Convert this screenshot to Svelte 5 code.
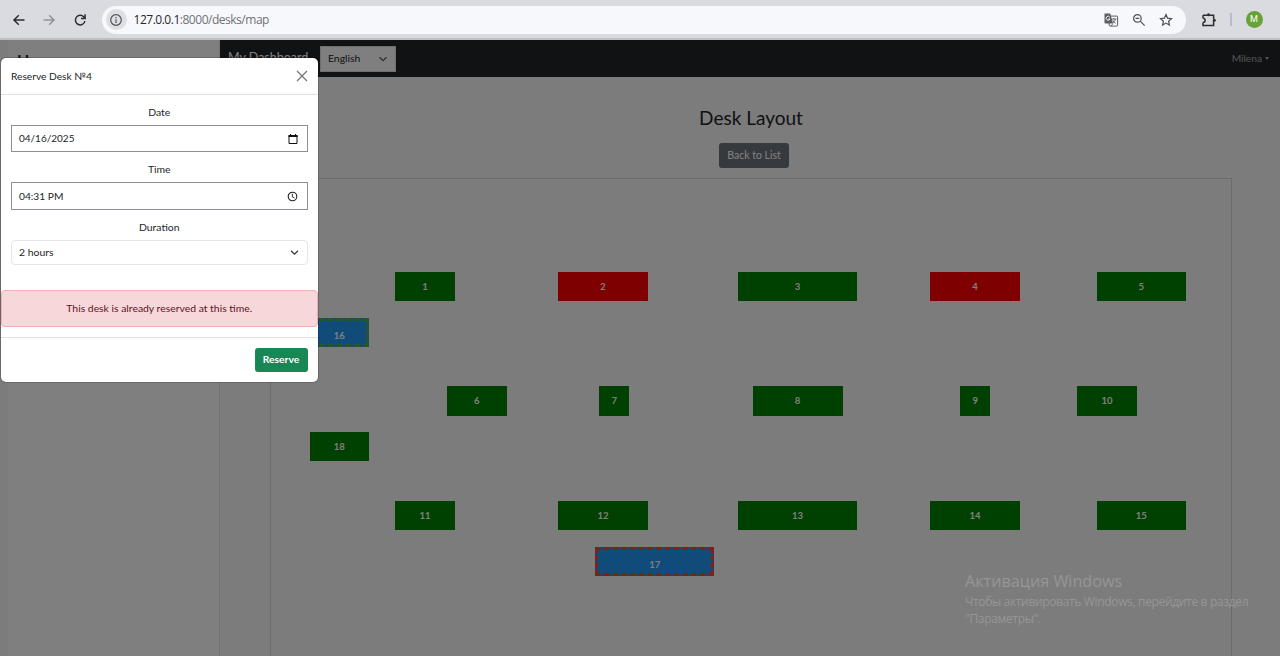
<script>
  const desks = [
    { n: 1, x: 395, y: 272, w: 60 },
    { n: 2, x: 558, y: 272, w: 90, busy: true },
    { n: 3, x: 738, y: 272, w: 119 },
    { n: 4, x: 930, y: 272, w: 90, busy: true },
    { n: 5, x: 1096.5, y: 272, w: 89.5 },
    { n: 6, x: 447, y: 386.4, w: 59.5 },
    { n: 7, x: 599, y: 386.4, w: 30.4 },
    { n: 8, x: 752.5, y: 386.4, w: 90 },
    { n: 9, x: 960, y: 386.4, w: 30.4 },
    { n: 10, x: 1077, y: 386.4, w: 60 },
    { n: 11, x: 395, y: 501, w: 60 },
    { n: 12, x: 558, y: 501, w: 90 },
    { n: 13, x: 738, y: 501, w: 119 },
    { n: 14, x: 930, y: 501, w: 90 },
    { n: 15, x: 1096.5, y: 501, w: 89.5 },
    { n: 16, x: 309.5, y: 318, w: 59.5, room: 'free' },
    { n: 17, x: 595, y: 546.6, w: 119.4, room: 'taken' },
    { n: 18, x: 309.5, y: 432, w: 59.5 }
  ];
  const originX = 271;
  const originY = 179;
</script>

<div class="window">
  <header class="toolbar">
    <div class="nav-icons">
      <svg width="14" height="14" viewBox="0 0 14 14"><path d="M12.5 7H2M6.8 2.2 2 7l4.8 4.8" class="ink" /></svg>
      <svg width="14" height="14" viewBox="0 0 14 14"><path d="M1.5 7H12M7.2 2.2 12 7l-4.8 4.8" class="ink pale" /></svg>
      <svg width="14" height="14" viewBox="0 0 14 14"><path d="M11.9 8.1A4.8 4.8 0 1 1 10.7 3.8L12 5.2M12.1 1.3v4.1H8" class="ink" /></svg>
    </div>
    <div class="address">
      <span class="info"><svg width="14" height="14" viewBox="0 0 14 14"><circle cx="7" cy="7" r="5.3" class="thin" /><path d="M7 6.3v3.6M7 4v1.3" class="thin" /></svg></span>
      <span class="url"><b>127.0.0.1</b>:8000/desks/map</span>
      <div class="actions">
        <svg width="16" height="16" viewBox="0 0 16 16"><rect x="6.2" y="4.1" width="8.400" height="10" rx=".7" fill="#f6f8fa" stroke="#5b5d61" /><path d="M1.8 1.500h5.400l2.900 10H2.500a1 1 0 0 1-1-1V2.200a.7.7 0 0 1 .3-.7z" fill="#5b5d61" /><path d="M6.800 5.100A2 2 0 1 0 7 7H5.200" fill="none" stroke="#fff" stroke-width=".9" /><path d="M8.800 7h4.600M11 6v1M12.400 7c-.3 1.800-1.500 3-2.400 3.800M9.800 8.300c.6 1.300 1.600 2.400 2.800 3M8 14l2-2.500" fill="none" stroke="#5b5d61" stroke-width=".9" /></svg>
        <svg width="14" height="14" viewBox="0 0 14 14"><circle cx="5.400" cy="5.400" r="3.800" class="thin" /><path d="m8.200 8.200 4.500 4.500M3.600 5.400h3.600" class="thin" /></svg>
        <svg width="14" height="14" viewBox="0 0 14 14"><path d="m7 1.600 1.600 3.600 3.900.4-2.900 2.600.8 3.900L7 10.100l-3.400 2 .8-3.900-2.900-2.600 3.900-.4z" class="thin" /></svg>
      </div>
    </div>
    <div class="right-icons">
      <svg width="16" height="16" viewBox="0 0 16 16"><path d="M2 3.200H6.600M8.400 3.200H12.600V7.100M12.600 9.200V13.500H2V10.500M2 6.200V3.200M2 6.200a2.150 2.150 0 0 1 0 4.300" class="ink" /><circle cx="7.500" cy="2.700" r="1.500" fill="#2b2c30" /><circle cx="13.300" cy="8.200" r="1.500" fill="#2b2c30" /></svg>
      <i></i>
      <span class="avatar">M</span>
    </div>
  </header>

  <div class="page">
    <aside class="sidebar"><h2>Home</h2></aside>
    <div class="main">
      <nav class="navbar">
        <span class="brand">My Dashboard</span>
        <div class="lang"><span>English</span><svg width="10" height="10" viewBox="0 0 10 10"><path d="m1.500 3.200 3.500 3.500 3.500-3.500" fill="none" stroke="#5d636b" stroke-width="1.300" /></svg></div>
        <span class="user">Milena<i></i></span>
      </nav>
      <section class="content">
        <h1>Desk Layout</h1>
        <button class="back">Back to List</button>
        <div class="floor">
          {#each desks as d (d.n)}
            <div
              class="desk {d.room ?? ''}"
              class:busy={d.busy}
              class:room={d.room}
              style="left:{d.x - originX}px;top:{d.y - originY}px;width:{d.w}px"
            >{d.n}</div>
          {/each}
        </div>
      </section>
    </div>
    <div class="backdrop"></div>
    <div class="modal">
      <div class="modal-head">
        <span>Reserve Desk №4</span>
        <svg width="12" height="12" viewBox="0 0 12 12"><path d="m1 1 10 10M11 1 1 11" fill="none" stroke="#777" stroke-width="1.300" /></svg>
      </div>
      <div class="modal-body">
        <div class="label">Date</div>
        <div class="field"><span class="date">04/16/2025</span><svg width="10" height="10" viewBox="0 0 10 10"><path d="M1 1.500h8v8H1z" fill="none" stroke="#111" /><path d="M.5 1h9v2h-9zM2 0h1v1H2zM7 0h1v1H7z" fill="#111" /></svg></div>
        <div class="label two">Time</div>
        <div class="field tall"><span class="time">04:31 PM</span><svg width="11" height="11" viewBox="0 0 11 11"><circle cx="5.500" cy="5.500" r="4.300" fill="none" stroke="#222" stroke-width="1.100" /><path d="M5.300 2.700v3l2.100 1.300" fill="none" stroke="#222" /></svg></div>
        <div class="label three">Duration</div>
        <div class="select"><span>2 hours</span><svg width="9" height="9" viewBox="0 0 10 10"><path d="m1.200 3 3.800 3.800L8.800 3" fill="none" stroke="#343a40" stroke-width="1.400" /></svg></div>
      </div>
      <div class="alert">This desk is already reserved at this time.</div>
      <div class="modal-foot"><button class="reserve">Reserve</button></div>
    </div>
  </div>

  <div class="watermark">
    <strong>Активация Windows</strong>
    <p>Чтобы активировать Windows, перейдите в раздел<br />"Параметры".</p>
  </div>
</div>

<style>
  :global(body) { margin: 0; overflow: hidden; }
  * { box-sizing: border-box; }
  .window { width: 1280px; height: 656px; display: flex; flex-direction: column; position: relative; overflow: hidden; font: 10.400px/16px Lato, sans-serif; color: #212529; }
  svg { display: block; flex: none; }
  .ink { fill: none; stroke: #2b2c30; stroke-width: 1.500; }
  .pale { stroke: #929398; }
  .thin { fill: none; stroke: #4e5054; stroke-width: 1.200; }
  .toolbar { height: 40px; flex: none; background: #dadbe1; border-bottom: 2px solid #bfc0c4; display: flex; align-items: center; padding: 1px 17px 0 11.500px; }
  .nav-icons { display: flex; gap: 16.500px; width: 90px; }
  .address { width: 1084px; height: 28px; border-radius: 14px; background: #f6f8fb; display: flex; align-items: center; padding: 0 13px 0 4px; }
  .info { width: 21px; height: 21px; border-radius: 50%; background: #dddfe5; display: grid; place-items: center; }
  .url { margin-left: 7px; font: 12px/18px "Open Sans", sans-serif; letter-spacing: -.48px; color: #707276; }
  .url b { font-weight: 400; color: #27292d; }
  .actions { margin-left: auto; display: flex; align-items: center; gap: 13px; }
  .right-icons { display: flex; align-items: center; margin-left: 15.500px; }
  .right-icons i { width: 1.500px; height: 13px; background: #b9bbc8; margin: 0 14px 0 13px; }
  .avatar { width: 17px; height: 17px; border-radius: 50%; background: #66a336; color: #fff; font: 9px/17px Roboto, sans-serif; text-align: center; }

  .page { flex: 1; min-height: 0; position: relative; display: flex; background: #f8f8f8; padding-left: 8px; }
  .sidebar { width: 212px; background: #fff; border-right: 1px solid #e4e4e4; padding-left: 9px; }
  .sidebar h2 { margin: 10px 0 0; height: 10px; overflow: hidden; font: 700 16px/20px Lato, sans-serif; }
  .main { flex: 1; min-width: 0; display: flex; flex-direction: column; }
  .navbar { height: 37px; flex: none; background: #212529; display: flex; align-items: center; padding: 0 11px 0 8px; }
  .brand { width: 92px; font-size: 12.500px; color: #fff; white-space: nowrap; position: relative; top: -1px; }
  .lang { width: 76px; height: 26px; background: #fff; border: 1px solid #dedede; padding: 0 7px; display: flex; justify-content: space-between; align-items: center; }
  .lang span { padding-bottom: 1px; }
  .user { margin-left: auto; color: #a6a8a9; display: flex; align-items: center; gap: 3px; font-size: 10.200px; padding-bottom: 1px; }
  .user i { border: 2.500px solid transparent; border-top: 3px solid #a6a8a9; border-bottom: 0; }
  .content { flex: 1; min-height: 0; display: flex; flex-direction: column; align-items: center; padding: 27px 48px 0 50px; }
  h1 { margin: 0; font: 400 19px/28px Lato, sans-serif; }
  .back { margin: 11px 0 10px 6px; width: 70px; height: 25px; flex: none; border: 0; border-radius: 3px; background: #6c757d; color: #fff; padding: 0 0 1px; font: 10.500px/24px Lato, sans-serif; }
  .floor { align-self: stretch; flex: 1; border: 1px solid #d6d6d6; border-bottom: 0; position: relative; }
  .desk { position: absolute; height: 29.400px; background: #008000; color: #fff; font-size: 9.500px; font-weight: 700; line-height: 30px; text-align: center; }
  .busy { background: #f00; }
  .room { background: #2196f3; border: 3px dashed #4caf50; line-height: 29px; }
  .taken { border-color: #f44336; }
  .backdrop { position: absolute; inset: 0; background: rgba(0, 0, 0, .5); }
  .modal { position: absolute; left: 1px; top: 18px; width: 316.500px; height: 324px; border-radius: 5px; background: #fff; box-shadow: 0 0 0 1px rgba(0, 0, 0, .16); display: flex; flex-direction: column; }
  .modal-head { height: 37px; border-bottom: 1px solid #dee2e6; display: flex; justify-content: space-between; align-items: center; padding: 0 10px; font-size: 10.200px; }
  .modal-body { height: 195px; padding: 9px 10px 0; }
  .label { text-align: center; height: 21px; }
  .field { height: 27px; border: 1px solid #8b8f99; display: flex; align-items: center; justify-content: space-between; padding: 0 9px 0 7px; }
  .tall { height: 28px; }
  .date { font-size: 10px; padding-bottom: 1px; }
  .time { font-size: 10.200px; }
  .two { margin-top: 9px; }
  .three { margin-top: 9px; }
  .select { height: 25px; border: 1px solid #e2e5e9; border-radius: 4px; display: flex; align-items: center; justify-content: space-between; padding: 0 8px 0 7px; }
  .select span { padding-bottom: 2px; }
  .alert { height: 37px; border: 1px solid #f1aeb5; border-radius: 4px; background: #f8d7da; color: #58151c; line-height: 34px; text-align: center; }
  .modal-foot { margin-top: 10px; flex: 1; border-top: 1px solid #dee2e6; display: flex; justify-content: flex-end; padding: 10px 10px 0; }
  .reserve { width: 53px; height: 24px; border: 0; border-radius: 3px; background: #198754; color: #fff; font: 700 10.300px/23px Lato, sans-serif; padding: 0 0 1px; }
  .watermark { position: absolute; left: 965px; top: 570px; font-family: "Open Sans", sans-serif; color: #969696; white-space: nowrap; }
  .watermark strong { display: block; font-weight: 400; font-size: 16.200px; line-height: 23px; }
  .watermark p { margin: 0; font-size: 12px; line-height: 17px; letter-spacing: -.34px; }
</style>
